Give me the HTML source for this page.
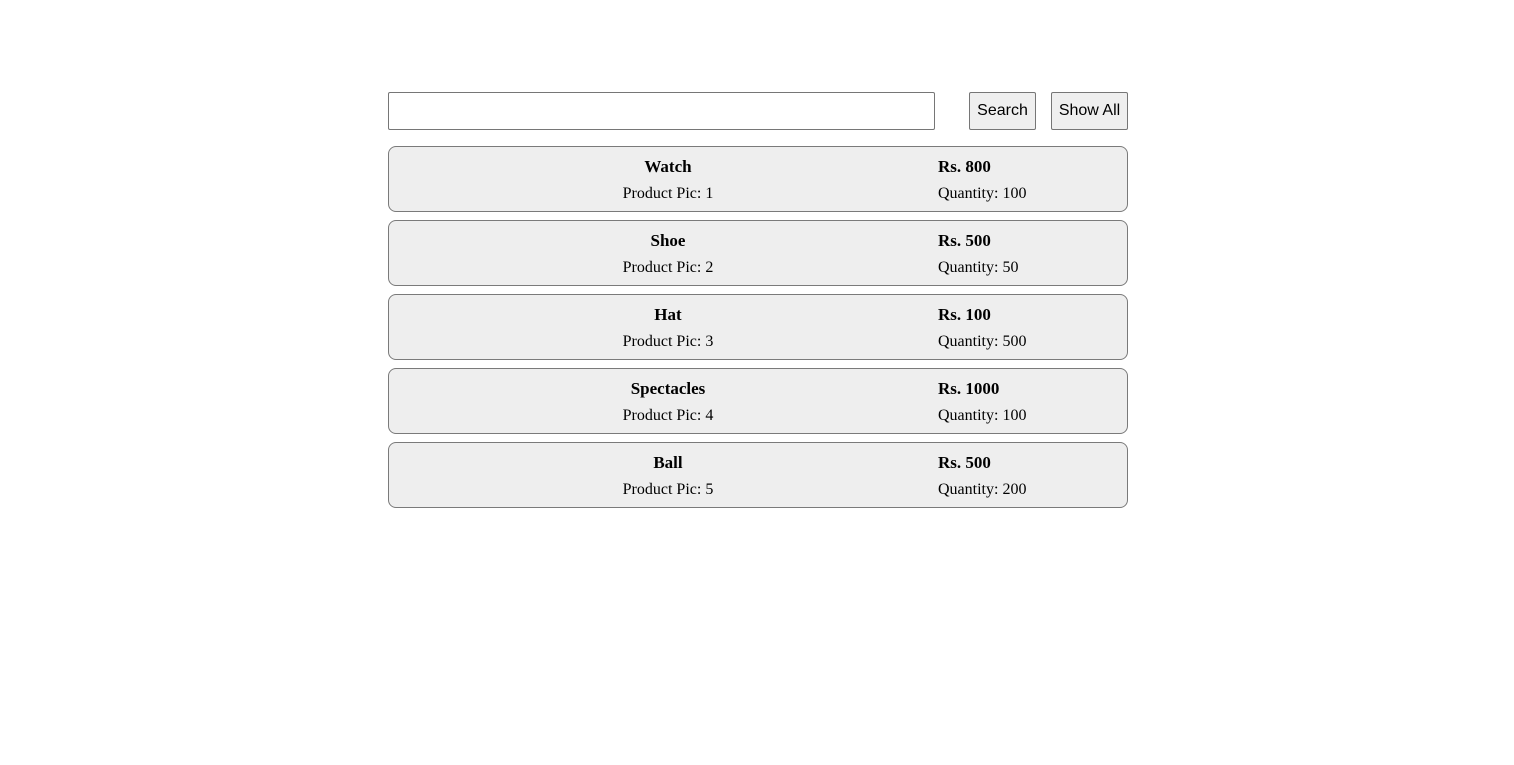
<!DOCTYPE html>
<html><head><meta charset="utf-8"><style>
body{margin:0;background:#fff;font-family:"Liberation Serif",serif;font-size:16px;color:#000}
.wrap{position:absolute;left:388px;top:92px;width:740px}
input{position:absolute;left:0;top:0;width:547px;height:38px;box-sizing:border-box;border:1px solid #767676;border-radius:2px;margin:0}
.btn{position:absolute;top:0;height:38px;box-sizing:border-box;border:1px solid #767676;border-radius:2px;background:#efefef;font-family:"Liberation Sans",sans-serif;font-size:16px;line-height:36px;text-align:center}
.card{position:absolute;left:0;width:740px;height:66px;box-sizing:border-box;border:1px solid #7a7a7a;border-radius:8px;background:#eeeeee}
.l{position:absolute;left:-1px;width:560px;text-align:center}
.r{position:absolute;left:549px}
.t{top:9px;font-weight:bold;line-height:22px;font-size:17px}
.s{top:37px;line-height:20px}
</style></head><body>
<div class="wrap">
<input type="text">
<div class="btn" style="left:581px;width:67px">Search</div>
<div class="btn" style="left:663px;width:77px">Show All</div>
<div class="card" style="top:54px"><div class="l t">Watch</div><div class="l s">Product Pic: 1</div><div class="r t">Rs. 800</div><div class="r s">Quantity: 100</div></div>
<div class="card" style="top:128px"><div class="l t">Shoe</div><div class="l s">Product Pic: 2</div><div class="r t">Rs. 500</div><div class="r s">Quantity: 50</div></div>
<div class="card" style="top:202px"><div class="l t">Hat</div><div class="l s">Product Pic: 3</div><div class="r t">Rs. 100</div><div class="r s">Quantity: 500</div></div>
<div class="card" style="top:276px"><div class="l t">Spectacles</div><div class="l s">Product Pic: 4</div><div class="r t">Rs. 1000</div><div class="r s">Quantity: 100</div></div>
<div class="card" style="top:350px"><div class="l t">Ball</div><div class="l s">Product Pic: 5</div><div class="r t">Rs. 500</div><div class="r s">Quantity: 200</div></div>
</div>
</body></html>
